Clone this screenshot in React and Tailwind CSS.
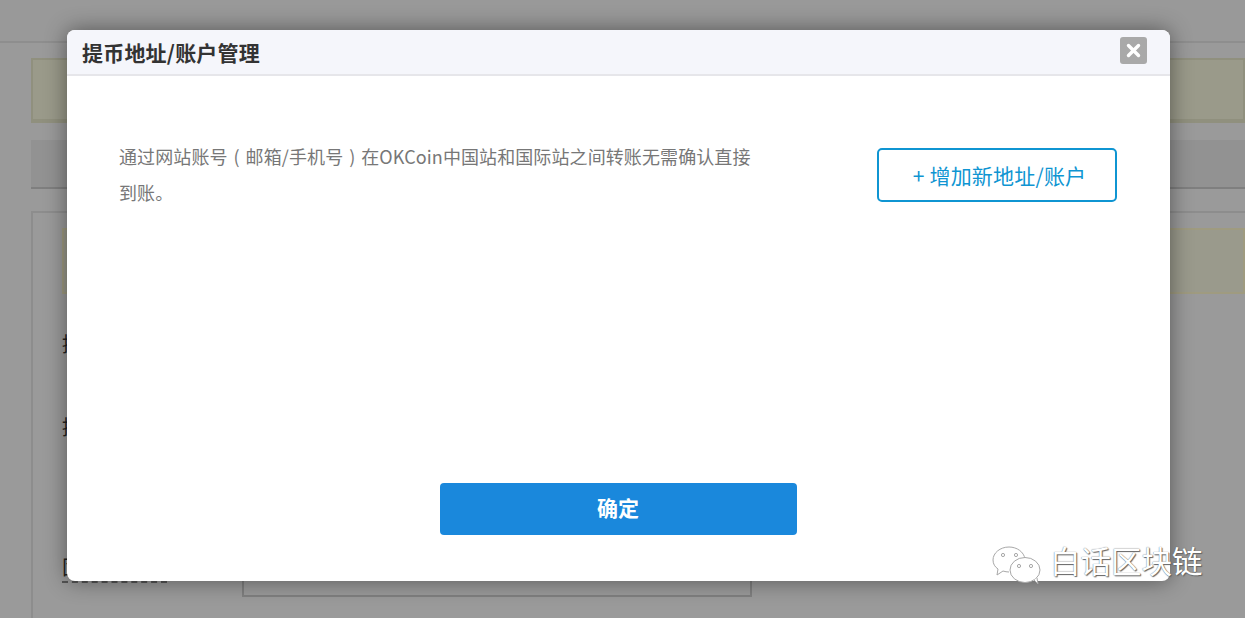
const cjk = { fontFamily: '"Noto Sans CJK SC","Open Sans",sans-serif' };

function Background() {
  return (
    <div className="flex h-[618px] w-full flex-col overflow-hidden bg-[#9a9a9a]">
      <div className="h-[43px] shrink-0 border-b-2 border-[#8e8e8e] bg-[#999999]" />
      <div className="flex flex-1 flex-col pl-[31px]">
        <div className="mt-[15px] h-[65px] w-[1214px] border-2 border-b-4 border-[#90907e] bg-[#9a9a8a]" />
        <div className="mt-[17px] h-[49px] w-[1214px] border-b-2 border-[#7f7f7f] bg-[#929292]" />
        <div className="mt-[22px] flex-1 border-l-2 border-t-2 border-[#8d8d8d] pl-[29px] pt-[15px]">
          <div className="h-[66px] border-2 border-[#9f9b80] bg-[#9a9a8c]" />
          <div className="relative h-[320px]">
            <div className="mt-[36px] text-[20px] leading-[28px] text-[#222]" style={cjk}>提</div>
            <div className="mt-[55px] text-[20px] leading-[28px] text-[#222]" style={cjk}>提</div>
            <div className="mt-[112px] w-[105px] border-b-2 border-dashed border-[#555] text-[20px] leading-[28px] text-[#222]" style={cjk}>固</div>
            <div className="absolute left-[180px] top-[223px] h-[44px] w-[510px] border-2 border-[#7f7f7f]" />
          </div>
        </div>
      </div>
    </div>
  );
}

function WeChat() {
  return (
    <svg width="52" height="40" viewBox="0 0 52 40" fill="none" stroke="#a8a8a8" strokeWidth="1">
      <path d="M17 2C8 2 1 8 1 15c0 4 2 7 5 9l-1 6 6-4c2 .6 4 1 6 1" fill="#fff" />
      <path d="M17 2c8 0 15 5 16 12" />
      <ellipse cx="33" cy="25" rx="15" ry="12.5" fill="#fff" />
      <path d="M42 35l4 4-1-6" fill="#fff" />
      <circle cx="11" cy="10" r="1.6" />
      <circle cx="24" cy="10" r="1.6" />
      <circle cx="27" cy="21" r="1.6" />
      <circle cx="39" cy="21" r="1.6" />
    </svg>
  );
}

export default function App() {
  return (
    <div className="relative h-[618px] w-full overflow-hidden" style={cjk}>
      <Background />
      <div className="absolute left-[67px] top-[30px] flex h-[551px] w-[1103px] flex-col rounded-[8px] bg-white shadow-[0_0_22px_rgba(0,0,0,0.45)]">
        <div className="flex h-[46px] shrink-0 items-start justify-between rounded-t-[8px] border-b-2 border-[#e6e6ea] bg-[#f5f6fb] pl-[15px] pr-[23px]">
          <h1 className="mt-[5px] text-[21px] font-bold leading-[34px] tracking-[0.2px] text-[#333]">提币地址/账户管理</h1>
          <div className="mt-[7px] flex h-[27px] w-[27px] items-center justify-center rounded-[3px] bg-[#a9a9a9]">
            <svg width="15" height="15" viewBox="0 0 15 15" stroke="#fff" strokeWidth="3.4" strokeLinecap="round">
              <path d="M2.5 2.5l10 10M12.5 2.5l-10 10" />
            </svg>
          </div>
        </div>
        <div className="flex items-start justify-between pl-[52px] pr-[53px] pt-[72px]">
          <div className="-mt-[10px] w-[640px] text-[18px] leading-[36px] tracking-[0.1px] text-[#777]">
            <p className="flex whitespace-nowrap">
              <span>通过网站账号</span>
              <span className="w-[18px] text-center">(</span>
              <span>邮箱/手机号</span>
              <span className="w-[18px] text-center">)</span>
              <span>在OKCoin中国站和国际站之间转账无需确认直接</span>
            </p>
            <p>到账。</p>
          </div>
          <button className="flex h-[54px] w-[240px] items-center justify-center rounded-[5px] border-2 border-[#0f95d2] pl-[5px] text-[21px] leading-[28px] tracking-[0.2px] text-[#0f95d2]">
            + 增加新地址/账户
          </button>
        </div>
        <div className="mt-auto flex justify-center pb-[46px] pr-[1px]">
          <button className="h-[52px] w-[357px] rounded-[4px] bg-[#1a88dc] pb-[2px] text-[21px] font-bold text-white">确定</button>
        </div>
      </div>
      <div className="absolute left-[992px] top-[545px] flex items-start gap-[6px]">
        <WeChat />
        <span className="-mt-[3px] text-[30.5px] leading-[36px] text-white [text-shadow:0_0_1px_#555,1px_1px_1px_#666]">白话区块链</span>
      </div>
    </div>
  );
}
